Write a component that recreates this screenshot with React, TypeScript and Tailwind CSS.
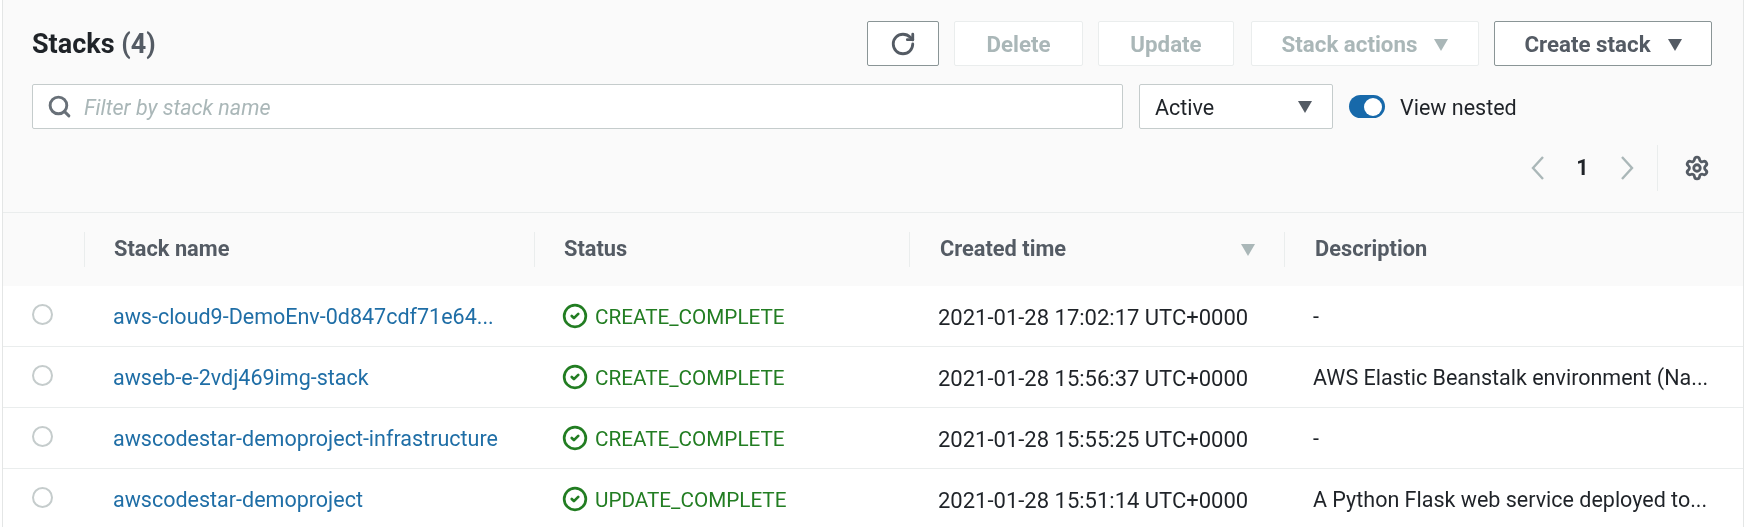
import { CircleCheck, RotateCw, Search, Settings } from 'lucide-react';

const rows = [
  { name: 'aws-cloud9-DemoEnv-0d847cdf71e64...', status: 'CREATE_COMPLETE', time: '2021-01-28 17:02:17 UTC+0000', desc: '-' },
  { name: 'awseb-e-2vdj469img-stack', status: 'CREATE_COMPLETE', time: '2021-01-28 15:56:37 UTC+0000', desc: 'AWS Elastic Beanstalk environment (Na...' },
  { name: 'awscodestar-demoproject-infrastructure', status: 'CREATE_COMPLETE', time: '2021-01-28 15:55:25 UTC+0000', desc: '-' },
  { name: 'awscodestar-demoproject', status: 'UPDATE_COMPLETE', time: '2021-01-28 15:51:14 UTC+0000', desc: 'A Python Flask web service deployed to...' },
];

function Caret({ className }: { className: string }) {
  return (
    <svg viewBox="0 0 14 12" className={className} fill="currentColor">
      <path d="M0 0h14L7 12z" />
    </svg>
  );
}

function Chevron({ points }: { points: string }) {
  return (
    <svg viewBox="0 0 14 24" className="w-[14px] h-[24px] text-[#aab7b8]" fill="none" stroke="currentColor" strokeWidth={2.4}>
      <polyline points={points} />
    </svg>
  );
}

function DisabledButton({ label, width }: { label: string; width: string }) {
  return (
    <button className={`${width} h-[45px] pt-[2px] flex items-center justify-center bg-white border border-[#eaeded] rounded-[2px] font-bold text-[22.3px] text-[#aab7b8]`}>
      {label}
    </button>
  );
}

export default function App() {
  return (
    <div className="w-[1747px] h-[527px] overflow-hidden bg-white pl-[2px] pr-[3px] font-['Roboto',sans-serif] text-[21.5px] text-[#1f2328] blur-[0.5px]">
      <div className="h-full border-l border-r border-[#e4e6e6]">
        {/* Header */}
        <div className="h-[213px] bg-[#fafafa] border-b border-[#eaeded] pt-[21px] pl-[29px] pr-[31px] flex flex-col">
          <div className="flex items-center justify-between h-[45px]">
            <h2 className="text-[27px] font-bold pt-[2px]">
              Stacks <span className="text-[#545b64]">(4)</span>
            </h2>
            <div className="flex items-center gap-[15px]">
              <button className="w-[72px] h-[45px] flex items-center justify-center bg-white border border-[#8a9596] rounded-[2px] text-[#545b64]">
                <RotateCw className="w-[26px] h-[26px]" strokeWidth={2.6} />
              </button>
              <DisabledButton label="Delete" width="w-[129px]" />
              <DisabledButton label="Update" width="w-[136px]" />
              <button className="w-[228px] h-[45px] ml-[2px] pt-[2px] flex items-center justify-center gap-[17px] bg-white border border-[#eaeded] rounded-[2px] font-bold text-[22.3px] text-[#aab7b8]">
                Stack actions
                <Caret className="w-[14px] h-[12px]" />
              </button>
              <button className="w-[218px] h-[45px] pt-[2px] flex items-center justify-center gap-[17px] bg-white border border-[#8a9596] rounded-[2px] font-bold text-[22.3px] text-[#545b64]">
                Create stack
                <Caret className="w-[14px] h-[12px]" />
              </button>
            </div>
          </div>

          <div className="flex items-center mt-[18px]">
            <div className="w-[1091px] h-[45px] flex items-center gap-[12px] pl-[14px] bg-white border border-[#c5cccc] rounded-[2px]">
              <Search className="w-[25px] h-[25px] text-[#687078]" strokeWidth={2.8} />
              <span className="italic text-[#aab7b8] pt-[3px]">Filter by stack name</span>
            </div>
            <div className="w-[194px] h-[45px] ml-[16px] flex items-center justify-between pl-[15px] pr-[20px] bg-white border border-[#c5cccc] rounded-[2px]">
              <span className="pt-[3px]">Active</span>
              <Caret className="w-[14px] h-[12px] text-[#545b64]" />
            </div>
            <div className="w-[36px] h-[23px] ml-[16px] flex items-center justify-end pr-[3px] rounded-full bg-[#1769aa]">
              <div className="w-[18px] h-[18px] rounded-full bg-white" />
            </div>
            <span className="ml-[15px] pt-[3px]">View nested</span>
          </div>

          <div className="flex items-center justify-end mt-[16px] h-[46px] pr-[2px]">
            <Chevron points="12,1 2,12 12,23" />
            <span className="w-[75px] text-center font-bold">1</span>
            <Chevron points="2,1 12,12 2,23" />
            <div className="h-[46px] ml-[23px] mr-[26px] border-l border-[#eaeded]" />
            <Settings className="w-[26px] h-[26px] text-[#545b64]" strokeWidth={2.6} />
          </div>
        </div>

        {/* Table head */}
        <div className="h-[73px] bg-[#fafafa] grid grid-cols-[81px_450px_375px_375px_1fr] items-center font-bold text-[21.8px] text-[#545b64]">
          <div />
          <div className="h-[35px] flex items-center pl-[29px] border-l border-[#eaeded]">Stack name</div>
          <div className="h-[35px] flex items-center pl-[29px] border-l border-[#eaeded]">Status</div>
          <div className="h-[35px] flex items-center justify-between pl-[30px] pr-[29px] border-l border-[#eaeded]">
            Created time
            <Caret className="w-[14px] h-[12px] text-[#aab7b8]" />
          </div>
          <div className="h-[35px] flex items-center pl-[30px] border-l border-[#eaeded]">Description</div>
        </div>

        {/* Rows */}
        {rows.map((row) => (
          <div key={row.time} className="h-[61px] grid grid-cols-[81px_450px_375px_375px_1fr] items-center border-b border-[#eaeded] last:border-b-0">
            <div className="pl-[29px] pb-[4px]">
              <div className="w-[21px] h-[21px] rounded-full bg-white border-2 border-[#c5cccc]" />
            </div>
            <a className="pl-[29px] pt-[2px] text-[#1f6ea6] whitespace-nowrap overflow-hidden">{row.name}</a>
            <div className="pl-[28px] flex items-center gap-[7px] text-[20.7px] text-[#227d22]">
              <CircleCheck className="w-[26px] h-[26px]" strokeWidth={2.5} />
              <span className="pt-[3px]">{row.status}</span>
            </div>
            <div className="pl-[29px] pt-[2px] text-[22px] whitespace-nowrap">{row.time}</div>
            <div className="pl-[29px] pt-[2px] whitespace-nowrap">{row.desc}</div>
          </div>
        ))}
      </div>
    </div>
  );
}
